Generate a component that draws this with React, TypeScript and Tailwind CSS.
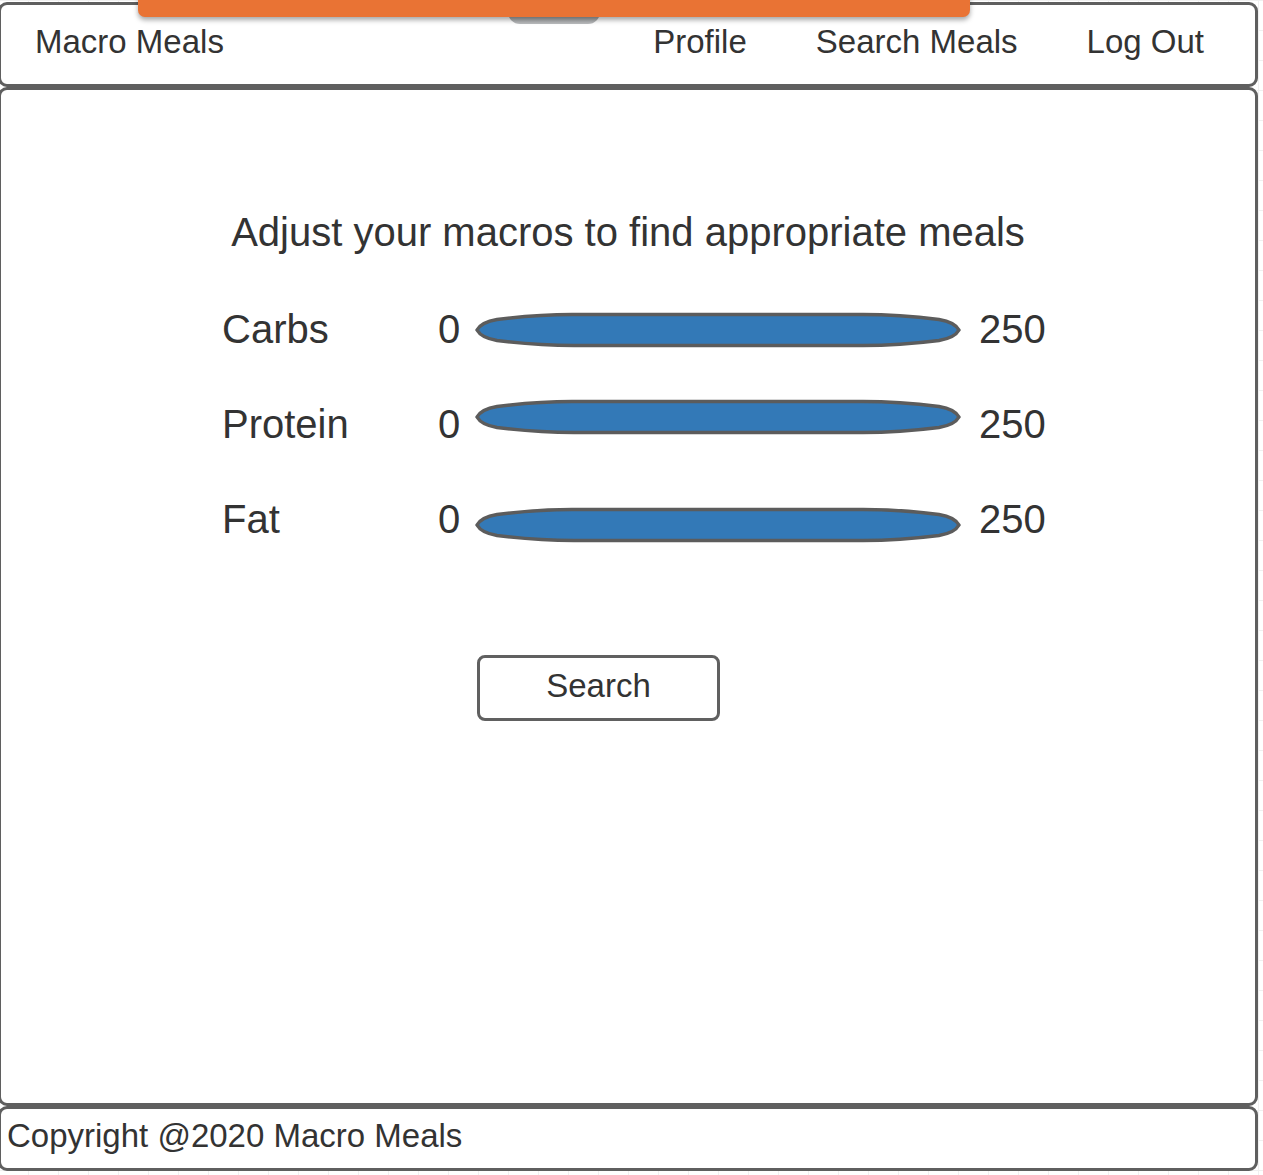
import React from "react";

const font = { fontFamily: '"Liberation Sans", Arial, sans-serif' };

function Slider() {
  return (
    <svg width="490" height="36" viewBox="0 0 490 36" className="block shrink-0">
      <path
        d="M 2 18 C 4.5 13.5, 10 9.5, 22 7.5 C 50 4, 75 2.5, 97 2.5 L 388 2.5 C 411 2.5, 436 4, 464 7.5 C 476 9.5, 481.5 13.5, 484 18 C 481.5 22.5, 476 26.5, 464 28.5 C 436 32, 411 33.5, 388 33.5 L 99 33.5 C 75 33.5, 50 32, 22 28.5 C 10 26.5, 4.5 22.5, 2 18 Z"
        fill="#3379b7"
        stroke="#5c5c5c"
        strokeWidth="3.5"
        strokeLinejoin="round"
      />
    </svg>
  );
}

function Row({ label, shift }: { label: string; shift: string }) {
  return (
    <div className="flex h-[48px] items-center pl-[221px] text-[40px] leading-[48px] text-[#333333]">
      <div className="w-[216px]">{label}</div>
      <div className="w-[22px]">0</div>
      <div className={"ml-[15px] " + shift}>
        <Slider />
      </div>
      <div className="ml-[14px]">250</div>
    </div>
  );
}

export default function App() {
  return (
    <div
      style={font}
      className="relative h-[1175px] w-[1263px] overflow-hidden bg-white bg-[linear-gradient(#f0f0f0_1px,transparent_1px),linear-gradient(90deg,#f0f0f0_1px,transparent_1px)] bg-[size:30px_30px] bg-[position:28px_0px]"
    >
      <div className="-ml-[2px] flex w-[1260px] flex-col pt-[2px]">
        {/* Header */}
        <div className="flex h-[85px] items-start rounded-[9px] border-[3px] border-[#5f5f5f] bg-white pl-[34px] pr-[51px] pt-[18px] text-[33px] leading-[38px] text-[#333333]">
          <div>Macro Meals</div>
          <div className="ml-auto flex gap-[69px]">
            <div>Profile</div>
            <div>Search Meals</div>
            <div>Log Out</div>
          </div>
        </div>

        {/* Main */}
        <div className="flex h-[1019px] flex-col rounded-[9px] border-[3px] border-[#5f5f5f] bg-white pt-[118px]">
          <div className="text-center text-[40px] leading-[48px] text-[#333333]">
            Adjust your macros to find appropriate meals
          </div>
          <div className="mt-[49px] flex flex-col gap-[47px]">
            <Row label="Carbs" shift="translate-y-[1px]" />
            <Row label="Protein" shift="-translate-y-[7px]" />
            <Row label="Fat" shift="translate-y-[6px]" />
          </div>
          <div className="ml-[476px] mt-[112px] flex h-[66px] w-[243px] items-center justify-center rounded-[8px] border-[3px] border-[#606060] pb-[5px] text-[33px] leading-[38px] text-[#333333]">
            Search
          </div>
        </div>

        {/* Footer */}
        <div className="flex h-[65px] items-center rounded-[9px] border-[3px] border-[#5f5f5f] bg-white pb-[5px] pl-[6px] text-[33px] leading-[38px] text-[#333333]">
          Copyright @2020 Macro Meals
        </div>
      </div>

      {/* Orange overlay bar */}
      <div className="absolute left-[508px] top-[8px] h-[16px] w-[92px] rounded-b-[12px] bg-[linear-gradient(#7f8183,#b3b5b7)] opacity-90" />
      <div className="absolute left-[138px] top-[-4px] h-[21px] w-[832px] rounded-b-[7px] bg-[#e97334] shadow-[0_3px_5px_rgba(0,0,0,0.35)]" />
    </div>
  );
}
